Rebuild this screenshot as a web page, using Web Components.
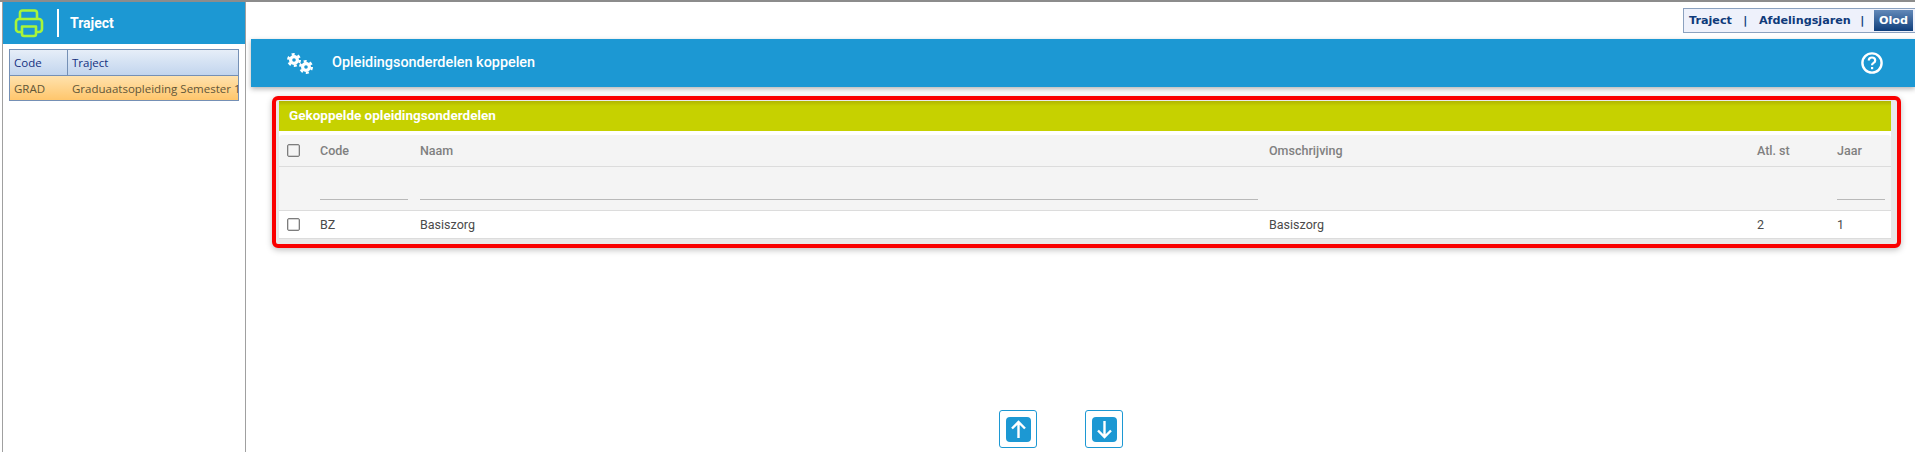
<!DOCTYPE html>
<html>
<head>
<meta charset="utf-8">
<title>Traject</title>
<style>
html, body { margin: 0; padding: 0; background: #fff; height: 100%; overflow: hidden; }
body { font-family: Roboto, "Liberation Sans", sans-serif; }
</style>
</head>
<body>
<app-shell>
    <side-panel slot="side" heading="Traject"></side-panel>
    <tab-strip slot="main"></tab-strip>
    <page-header slot="main" heading="Opleidingsonderdelen koppelen"></page-header>
    <linked-table slot="main" heading="Gekoppelde opleidingsonderdelen"></linked-table>
    <move-buttons slot="main"></move-buttons>
</app-shell>

<script>
const shellTemplate = document.createElement('template');
shellTemplate.innerHTML = `
    <style>
        :host {
            display: flex;
            height: 452px;
            box-sizing: border-box;
            border-top: 2px solid #8c8c8c;
            overflow: hidden;
        }
        .side {
            display: block;
            margin-left: 2px;
            border-left: 1px solid #a0a0a0;
            border-right: 1px solid #a0a0a0;
            width: 242px;
            flex: 0 0 242px;
        }
        .main {
            flex: 1;
            min-width: 0;
            display: flex;
            flex-direction: column;
        }
    </style>
    <div class="side"><slot name="side"></slot></div>
    <div class="main"><slot name="main"></slot></div>
`;

class AppShell extends HTMLElement {
    constructor() {
        super();
        this.attachShadow({ mode: 'open' }).appendChild(shellTemplate.content.cloneNode(true));
    }
}

const sideTemplate = document.createElement('template');
sideTemplate.innerHTML = `
    <style>
        :host { display: block; }
        .top {
            display: flex;
            align-items: center;
            height: 42px;
            background: #1c98d3;
            padding-left: 11px;
        }
        .top svg { display: block; }
        .bar { width: 2px; height: 28px; background: #fff; margin-left: 13px; margin-right: 11px; }
        .title { color: #fff; font: 700 14px Roboto, sans-serif; }
        .grid {
            margin: 5px 6px 0 6px;
            border: 1px solid #7590b5;
            font: 11.500px "Open Sans", "Noto Sans", sans-serif;
        }
        .row { display: grid; grid-template-columns: 57px 1fr; align-items: center; white-space: nowrap; }
        .row span { padding-left: 4px; }
        .head {
            height: 26px;
            color: #14307f;
            background: linear-gradient(#e6eef8, #c2d5ee);
            border-bottom: 1px solid #7590b5;
            box-sizing: border-box;
        }
        .head span { line-height: 25px; }
        .head span + span { border-left: 1px solid #7590b5; }
        .sel {
            height: 24px;
            color: #5f5638;
            background: linear-gradient(#ffe2ad, #ffc66c);
        }
        .sel span + span { padding-left: 5px; }
    </style>
    <div class="top">
        <svg width="30" height="30" viewBox="0 0 30 30" fill="none" stroke="#a8f53a" stroke-width="2.6" stroke-linejoin="round">
            <path d="M6 11V5q0-2.500 2.500-2.500h12q2.500 0 2.500 2.500v6"/>
            <rect x="2" y="11" width="26" height="13" rx="3"/>
            <path d="M8 18.500h14v7.500q0 2-2 2h-10q-2 0-2-2z" fill="#1c98d3"/>
        </svg>
        <div class="bar"></div>
        <div class="title"></div>
    </div>
    <div class="grid">
        <div class="row head"><span>Code</span><span>Traject</span></div>
        <div class="row sel"><span>GRAD</span><span>Graduaatsopleiding Semester 1</span></div>
    </div>
`;

class SidePanel extends HTMLElement {
    constructor() {
        super();
        this.attachShadow({ mode: 'open' }).appendChild(sideTemplate.content.cloneNode(true));
        this.shadowRoot.querySelector('.title').textContent = this.getAttribute('heading');
    }
}

const tabsTemplate = document.createElement('template');
tabsTemplate.innerHTML = `
    <style>
        :host {
            display: flex;
            justify-content: flex-end;
            padding-top: 6px;
            height: 37px;
            box-sizing: border-box;
            flex: none;
        }
        .strip {
            display: flex;
            align-items: stretch;
            width: 232px;
            height: 25px;
            box-sizing: border-box;
            border: 1px solid #8ba1bf;
            border-right: 0;
            background: #eef1fb;
            color: #0f3a7a;
            font: 700 11.200px "DejaVu Sans", sans-serif;
        }
        .strip > span { display: flex; align-items: center; }
        .t1 { padding-left: 5px; }
        .sep { width: 27px; justify-content: center; }
        .sep.last { flex: 1; }
        .on {
            margin: 1px 2px 1px 0;
            padding: 0 5px;
            color: #fff;
            background: linear-gradient(#6288b8, #0f3f7c);
        }
    </style>
    <div class="strip">
        <span class="t1">Traject</span><span class="sep">|</span><span>Afdelingsjaren</span><span class="sep last">|</span><span class="on">Olod</span>
    </div>
`;

class TabStrip extends HTMLElement {
    constructor() {
        super();
        this.attachShadow({ mode: 'open' }).appendChild(tabsTemplate.content.cloneNode(true));
    }
}

const headerTemplate = document.createElement('template');
headerTemplate.innerHTML = `
    <style>
        :host {
            display: flex;
            align-items: center;
            height: 48px;
            flex: none;
            margin-left: 5px;
            background: #1c98d3;
            color: #fff;
            box-shadow: 0 2px 5px rgba(0,0,0,.3);
            padding-left: 36px;
            padding-right: 32px;
            position: relative;
        }
        .title { margin-left: 19px; font: 500 14.400px Roboto, sans-serif; flex: 1; margin-top: -1px; }
        svg { display: block; }
    </style>
    <svg width="26" height="22" viewBox="0 0 26 22" fill="none" stroke="#fff">
        <circle cx="7" cy="8" r="3.400" stroke-width="3.200"/>
        <circle cx="7" cy="8" r="5.800" stroke-width="2.400" stroke-dasharray="3 3.070"/>
        <circle cx="19" cy="15" r="3.400" stroke-width="3.200"/>
        <circle cx="19" cy="15" r="5.800" stroke-width="2.400" stroke-dasharray="3 3.070"/>
    </svg>
    <div class="title"></div>
    <svg width="22" height="22" viewBox="0 0 22 22" fill="none" stroke="#fff">
        <circle cx="11" cy="11" r="9.600" stroke-width="2.400"/>
        <path d="M7.800 8.600q0-3.100 3.200-3.100t3.200 2.900q0 1.500-1.600 2.500t-1.600 2.400" stroke-width="2.200"/>
        <rect x="10" y="15" width="2.200" height="2.200" fill="#fff" stroke="none"/>
    </svg>
`;

class PageHeader extends HTMLElement {
    constructor() {
        super();
        this.attachShadow({ mode: 'open' }).appendChild(headerTemplate.content.cloneNode(true));
        this.shadowRoot.querySelector('.title').textContent = this.getAttribute('heading');
    }
}

const tableTemplate = document.createElement('template');
tableTemplate.innerHTML = `
    <style>
        :host {
            display: block;
            flex: none;
            margin: 9px 14px 0 26px;
            height: 152px;
            box-sizing: border-box;
            border: 4px solid #fa0000;
            border-radius: 6px;
            padding: 1px 6px 0 3px;
            background: #e9e9e9;
            box-shadow: 0 2px 6px rgba(0,0,0,.25);
            color: #555;
        }
        .panel { background: #fff; height: 138px; }
        .bar {
            height: 30px;
            line-height: 29px;
            background: linear-gradient(#b0b500, #c6d100 5px);
            color: #fff;
            font: 700 13.500px/29px Roboto, sans-serif;
            padding-left: 10px;
        }
        .row {
            display: grid;
            grid-template-columns: 41px 100px 849px 488px 80px 1fr;
            align-items: center;
            font: 12.500px Roboto, sans-serif;
            border-bottom: 1px solid #dcdcdc;
            box-sizing: border-box;
        }
        .heads { margin-top: 4px; height: 32px; background: #f4f4f4; color: #808080; font-weight: 500; border-radius: 3px 3px 0 0; }
        .filter { height: 44px; background: #f4f4f4; }
        .data { height: 28px; background: #fff; color: #4a4a4a; }
        .box {
            width: 13px; height: 13px;
            margin-left: 8px;
            box-sizing: border-box;
            border: 1px solid #7d7d7d;
            border-radius: 2px;
            background: #fff;
            box-shadow: inset 0 0 0 .5px #aaa;
        }
        .heads .box { background: #f4f4f4; }
        .line { height: 1px; background: #b9b9b9; margin-top: 22px; }
        .code { width: 88px; }
        .naam { width: 838px; }
        .jaar { width: 48px; }
    </style>
    <div class="panel">
        <div class="bar"></div>
        <div class="row heads"><div class="box"></div><div>Code</div><div>Naam</div><div>Omschrijving</div><div>Atl. st</div><div>Jaar</div></div>
        <div class="row filter"><div></div><div class="line code"></div><div class="line naam"></div><div></div><div></div><div class="line jaar"></div></div>
        <div class="row data"><div class="box"></div><div>BZ</div><div>Basiszorg</div><div>Basiszorg</div><div>2</div><div>1</div></div>
    </div>
`;

class LinkedTable extends HTMLElement {
    constructor() {
        super();
        this.attachShadow({ mode: 'open' }).appendChild(tableTemplate.content.cloneNode(true));
        this.shadowRoot.querySelector('.bar').textContent = this.getAttribute('heading');
    }
}

const moveTemplate = document.createElement('template');
moveTemplate.innerHTML = `
    <style>
        :host { display: flex; gap: 48px; flex: none; margin-top: 162px; padding-left: 753px; }
        button {
            width: 38px; height: 38px;
            padding: 0;
            display: flex; align-items: center; justify-content: center;
            background: #fff;
            border: 1px solid #1c98d3;
            border-radius: 3px;
        }
        i { display: block; width: 25px; height: 25px; background: #1c98d3; border-radius: 4px; }
        svg { display: block; }
    </style>
    <button><i><svg width="25" height="25" viewBox="0 0 25 25" fill="none" stroke="#fff" stroke-width="2.400"><path d="M12.500 21V6M6 11.500l6.500-6.500 6.500 6.500"/></svg></i></button>
    <button><i><svg width="25" height="25" viewBox="0 0 25 25" fill="none" stroke="#fff" stroke-width="2.400"><path d="M12.500 4v15M6 13.500l6.500 6.500 6.500-6.500"/></svg></i></button>
`;

class MoveButtons extends HTMLElement {
    constructor() {
        super();
        this.attachShadow({ mode: 'open' }).appendChild(moveTemplate.content.cloneNode(true));
    }
}

customElements.define('app-shell', AppShell);
customElements.define('side-panel', SidePanel);
customElements.define('tab-strip', TabStrip);
customElements.define('page-header', PageHeader);
customElements.define('linked-table', LinkedTable);
customElements.define('move-buttons', MoveButtons);
</script>
</body>
</html>
